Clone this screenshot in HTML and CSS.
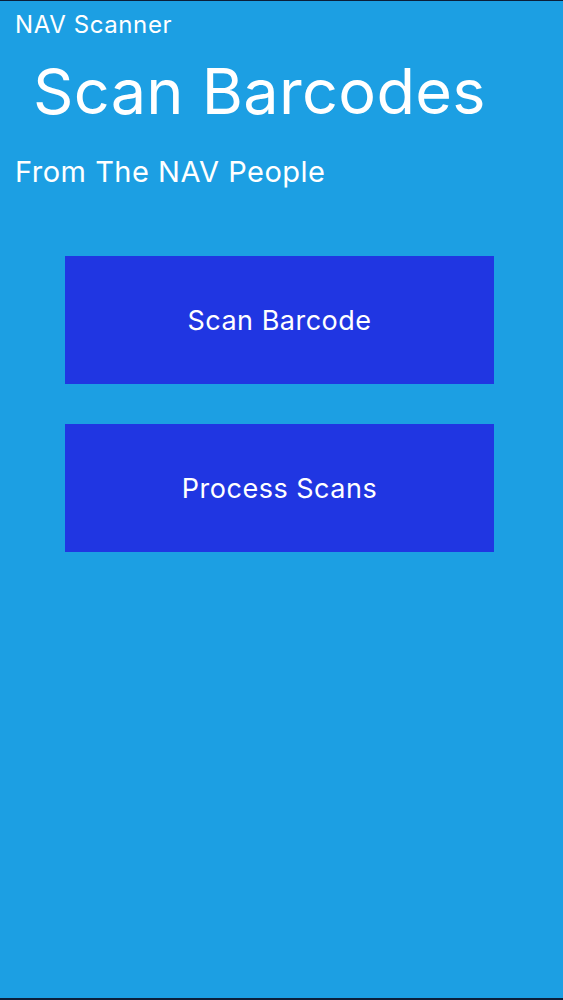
FILE: index.html
```html
<!DOCTYPE html>
<html lang="en">
<head>
    <meta charset="UTF-8">
    <meta name="viewport" content="width=device-width, initial-scale=1.0">
    <title>NAV Scanner</title>
    <link rel="stylesheet" href="styles.css">
</head>
<body>
    <div class="screen">
        <div class="app-name">NAV Scanner</div>
        <h1 class="title">Scan Barcodes</h1>
        <div class="subtitle">From The NAV People</div>

        <div class="actions">
            <button class="action-button">Scan Barcode</button>
            <button class="action-button">Process Scans</button>
        </div>
    </div>
</body>
</html>
```

FILE: styles.css
```css
*, *::before, *::after {
	box-sizing: border-box;
}

body {
	margin: 0;
	background-color: #0b1f3a;
	font-family: Inter, "Liberation Sans", Arial, sans-serif;
}

.screen {
	height: 997px;
	margin-top: 1px;
	padding-top: 9px;
	background-color: #1c9fe3;
	color: white;
	overflow: hidden;
}

.app-name {
	padding-left: 15px;
	font-size: 24px;
	line-height: 30px;
	letter-spacing: 0.6px;
}

.title {
	margin: 13px 0 0 33px;
	font-size: 63px;
	font-weight: normal;
	line-height: 76px;
	letter-spacing: 0.3px;
}

.subtitle {
	margin: 26px 0 0 15px;
	font-size: 29px;
	line-height: 34px;
	letter-spacing: 0.5px;
}

.actions {
	display: flex;
	flex-direction: column;
	gap: 40px;
	margin: 67px 69px 0 65px;
}

.action-button {
	height: 128px;
	border: none;
	background-color: #2036e2;
	color: white;
	font-family: inherit;
	font-size: 27px;
	letter-spacing: 0.5px;
	cursor: pointer;
}
```
